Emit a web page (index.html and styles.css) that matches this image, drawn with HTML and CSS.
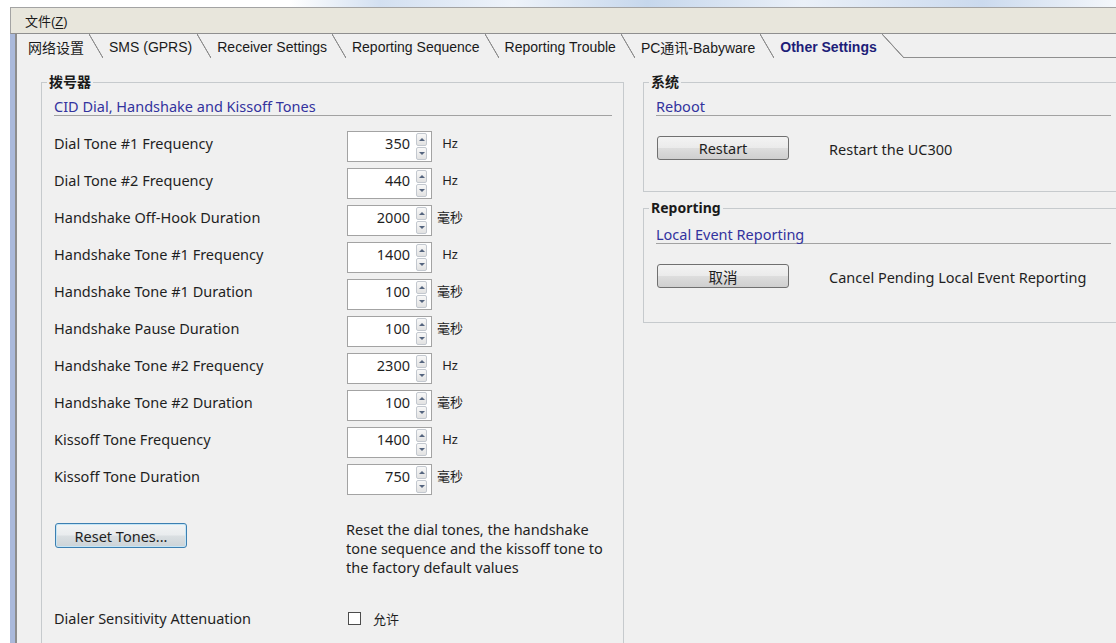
FILE: index.html
```html
<!DOCTYPE html>
<html lang="zh-CN">
<head>
<meta charset="utf-8">
<title>Other Settings</title>
<link rel="stylesheet" href="styles.css">
</head>
<body>
<div class="titlebar"></div>
<div class="window">
  <div class="menubar"><span class="menu-item">文件(<u>Z</u>)</span></div>
  <div class="frame">
    <div class="frame-in">
      <div class="tabs">
        <div class="tab first"><span class="tab-text">网络设置</span></div>
        <div class="tab"><span class="tab-text">SMS (GPRS)</span></div>
        <div class="tab"><span class="tab-text">Receiver Settings</span></div>
        <div class="tab"><span class="tab-text">Reporting Sequence</span></div>
        <div class="tab"><span class="tab-text">Reporting Trouble</span></div>
        <div class="tab"><span class="tab-text">PC通讯-Babyware</span></div>
        <div class="tab active"><span class="tab-text">Other Settings</span></div>
        <div class="tab-fill"></div>
      </div>

      <div class="page">
        <fieldset class="group dialer">
          <legend>拨号器</legend>
          <div class="group-body">
            <div class="sect-head">CID Dial, Handshake and Kissoff Tones</div>
            <div class="rows">
              <div class="row"><span class="label">Dial Tone #1 Frequency</span><div class="spin"><span class="value">350</span><span class="spin-btns"><i class="up"></i><i class="down"></i></span></div><span class="unit">Hz</span></div>
              <div class="row"><span class="label">Dial Tone #2 Frequency</span><div class="spin"><span class="value">440</span><span class="spin-btns"><i class="up"></i><i class="down"></i></span></div><span class="unit">Hz</span></div>
              <div class="row"><span class="label">Handshake Off-Hook Duration</span><div class="spin"><span class="value">2000</span><span class="spin-btns"><i class="up"></i><i class="down"></i></span></div><span class="unit">毫秒</span></div>
              <div class="row"><span class="label">Handshake Tone #1 Frequency</span><div class="spin"><span class="value">1400</span><span class="spin-btns"><i class="up"></i><i class="down"></i></span></div><span class="unit">Hz</span></div>
              <div class="row"><span class="label">Handshake Tone #1 Duration</span><div class="spin"><span class="value">100</span><span class="spin-btns"><i class="up"></i><i class="down"></i></span></div><span class="unit">毫秒</span></div>
              <div class="row"><span class="label">Handshake Pause Duration</span><div class="spin"><span class="value">100</span><span class="spin-btns"><i class="up"></i><i class="down"></i></span></div><span class="unit">毫秒</span></div>
              <div class="row"><span class="label">Handshake Tone #2 Frequency</span><div class="spin"><span class="value">2300</span><span class="spin-btns"><i class="up"></i><i class="down"></i></span></div><span class="unit">Hz</span></div>
              <div class="row"><span class="label">Handshake Tone #2 Duration</span><div class="spin"><span class="value">100</span><span class="spin-btns"><i class="up"></i><i class="down"></i></span></div><span class="unit">毫秒</span></div>
              <div class="row"><span class="label">Kissoff Tone Frequency</span><div class="spin"><span class="value">1400</span><span class="spin-btns"><i class="up"></i><i class="down"></i></span></div><span class="unit">Hz</span></div>
              <div class="row"><span class="label">Kissoff Tone Duration</span><div class="spin"><span class="value">750</span><span class="spin-btns"><i class="up"></i><i class="down"></i></span></div><span class="unit">毫秒</span></div>
            </div>

            <div class="reset">
              <div class="reset-cell"><button class="btn btn-focus" type="button">Reset Tones...</button></div>
              <p class="note">Reset the dial tones, the handshake<br>tone sequence and the kissoff tone to<br>the factory default values</p>
            </div>

            <div class="check-row">
              <span class="label">Dialer Sensitivity Attenuation</span>
              <span class="checkbox"></span>
              <span class="check-text">允许</span>
            </div>
          </div>
        </fieldset>

        <div class="right-col">
          <fieldset class="group">
            <legend>系统</legend>
            <div class="group-body">
              <div class="sect-head">Reboot</div>
              <div class="action action-system">
                <button class="btn" type="button">Restart</button>
                <span class="action-text">Restart the UC300</span>
              </div>
            </div>
          </fieldset>

          <fieldset class="group reporting">
            <legend>Reporting</legend>
            <div class="group-body">
              <div class="sect-head sect-head-low">Local Event Reporting</div>
              <div class="action action-report">
                <button class="btn" type="button">取消</button>
                <span class="action-text">Cancel Pending Local Event Reporting</span>
              </div>
            </div>
          </fieldset>
        </div>
      </div>
    </div>
  </div>
</div>
</body>
</html>
```

FILE: styles.css
```css
html, body {
  margin: 0;
  height: 100%;
  overflow: hidden;
  background: #ffffff;
}

body {
  font-family: "Noto Sans", "Noto Sans CJK SC", sans-serif;
  font-size: 14.5px;
  color: #1f1f1f;
}

/* strip of the window caption above the menu */
.titlebar {
  height: 7px;
  background: linear-gradient(to right, #ffffff 0%, #ffffff 26%, #d3e0f1 34%, #eef3fa 46%, #c6d7ec 58%, #eaf0f8 72%, #cbdaee 88%, #f4f7fb 100%);
}

.window {
  margin-left: 10px;
  height: calc(100% - 7px);
  display: flex;
  flex-direction: column;
}

/* menu bar */
.menubar {
  box-sizing: border-box;
  height: 27px;
  flex: none;
  background: #e8e6dc;
  border-top: 1px solid #a3a3a3;
  border-left: 1px solid #a3a3a3;
  border-bottom: 1px solid #8f8f8f;
  display: flex;
  align-items: center;
  padding-left: 14px;
  font-family: "Liberation Sans", "Noto Sans CJK SC", sans-serif;
  font-size: 13px;
  color: #1a1a1a;
}

.menu-item u {
  text-decoration: underline;
  text-underline-offset: 2px;
}

/* client frame with its blue window edge */
.frame {
  flex: 1;
  display: flex;
  border-left: 5px solid #aab9db;
}

.frame-in {
  flex: 1;
  display: flex;
  flex-direction: column;
  border-left: 2px solid #8d8d8d;
  background: #f0f0f0;
}

/* tab strip */
.tabs {
  display: flex;
  height: 24px;
  flex: none;
}

.tab {
  display: flex;
  align-items: stretch;
  font-family: "Liberation Sans", "Noto Sans CJK SC", sans-serif;
  font-size: 14px;
  color: #1a1a1a;
}

.tab-text {
  display: flex;
  align-items: center;
  padding: 1px 5px 0 6px;
  white-space: nowrap;
}

.tab.first .tab-text {
  padding-left: 11px;
}

.tab::after {
  content: "";
  width: 14px;
  background: linear-gradient(to top right,
    transparent calc(50% - 0.8px),
    #8f8f8f calc(50% - 0.3px),
    #8f8f8f calc(50% + 0.3px),
    transparent calc(50% + 0.8px));
}

.tab.active .tab-text {
  font-weight: bold;
  color: #1d1d78;
}

.tab.active::after {
  width: 22px;
}

.tab-fill {
  flex: 1;
  border-bottom: 1px solid #8f8f8f;
}

/* page body */
.page {
  flex: 1;
  display: flex;
  align-items: flex-start;
  gap: 19px;
  padding: 16px 0 0 24px;
}

.group {
  margin: 0;
  padding: 0;
  min-width: 0;
  border: 1px solid #c6cacd;
  box-sizing: border-box;
}

.group legend {
  margin-left: 5px;
  padding: 0 2px;
  font-size: 14px;
  line-height: 16px;
  font-weight: bold;
  color: #1a1a1a;
}

.group-body {
  padding: 0 11px 0 12px;
}

.dialer {
  width: 583px;
  height: 700px;
  flex: none;
}

.sect-head {
  margin-top: 7px;
  line-height: 18px;
  color: #33339e;
  border-bottom: 1px solid #a2a2a2;
}

.sect-head-low {
  margin-top: 9px;
}

/* numeric rows */
.rows {
  margin-top: 12px;
}

.row {
  display: flex;
  align-items: flex-start;
  height: 37px;
}

.label {
  flex: 0 0 293px;
  line-height: 20px;
  padding-top: 5px;
  white-space: nowrap;
}

.spin {
  box-sizing: border-box;
  display: flex;
  align-items: flex-start;
  width: 85px;
  height: 31px;
  margin-top: 3px;
  border: 1px solid #a3a3a3;
  background: #ffffff;
}

.value {
  flex: 0 0 62px;
  text-align: right;
  line-height: 20px;
  padding-top: 1px;
}

.spin-btns {
  display: flex;
  flex-direction: column;
  gap: 1px;
  margin: 1px 0 0 6px;
}

.spin-btns i {
  box-sizing: border-box;
  width: 11px;
  height: 13px;
  border: 1px solid #c3c8cf;
  border-radius: 2px;
  background: linear-gradient(#f8f8f8, #e2e2e2);
  display: flex;
  align-items: center;
  justify-content: center;
}

.spin-btns i::before {
  content: "";
  border-left: 3px solid transparent;
  border-right: 3px solid transparent;
}

.spin-btns .up::before {
  border-bottom: 3px solid #55657f;
}

.spin-btns .down::before {
  border-top: 3px solid #55657f;
}

.unit {
  width: 32px;
  margin-left: 2px;
  text-align: center;
  font-size: 13px;
  line-height: 20px;
  padding-top: 5px;
}

/* reset area */
.reset {
  display: flex;
  align-items: flex-start;
  margin-top: 22px;
}

.reset-cell {
  flex: 0 0 292px;
  padding-top: 3px;
}

.reset-cell .btn {
  margin-left: 1px;
}

.note {
  margin: 0;
  line-height: 19px;
}

/* buttons */
.btn {
  box-sizing: border-box;
  width: 132px;
  height: 24px;
  padding: 0;
  border: 1px solid #707070;
  border-radius: 3px;
  background: linear-gradient(#f3f3f3 0%, #ebebeb 48%, #dddddd 52%, #cfcfcf 100%);
  font-family: inherit;
  font-size: 14.5px;
  color: #1f1f1f;
}

.btn-focus {
  height: 25px;
  border-color: #3c7fb1;
  box-shadow: inset 0 0 0 1px #c4e5f6;
  background: linear-gradient(#f2f4f5 0%, #e9ecee 48%, #dadfe2 52%, #ccd3d7 100%);
}

/* checkbox row */
.check-row {
  display: flex;
  align-items: center;
  height: 20px;
  margin-top: 31px;
}

.check-row .label {
  padding-top: 0;
  flex-basis: 294px;
}

.checkbox {
  box-sizing: border-box;
  width: 13px;
  height: 13px;
  border: 1px solid #4c4c4c;
  background: #ffffff;
}

.check-text {
  margin-left: 12px;
  font-size: 13px;
}

/* right column */
.right-col {
  flex: none;
  width: 480px;
  display: flex;
  flex-direction: column;
}

.action {
  display: flex;
  align-items: center;
  gap: 40px;
  margin-top: 20px;
  padding-left: 1px;
}

.action-system {
  padding-bottom: 31px;
}

.action-report {
  padding-bottom: 34px;
}

.action-text {
  padding-top: 2px;
}

.reporting {
  margin-top: 8px;
}
```
